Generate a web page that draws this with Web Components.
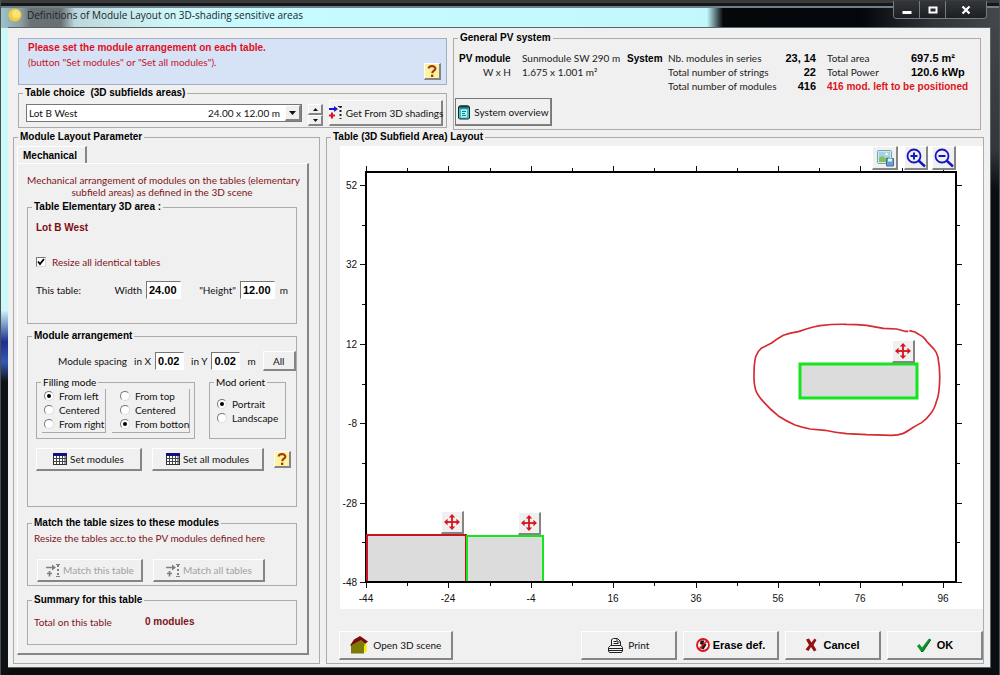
<!DOCTYPE html>
<html lang="en">
<head>
<meta charset="utf-8">
<title>Definitions of Module Layout on 3D-shading sensitive areas</title>
<style>
  html { height: 100%; }
  body { margin: 0; min-height: 100%; display: flex; background: #000; }
</style>
</head>
<body>
<app-window></app-window>
<script>
const base = `
  *, *::before, *::after { box-sizing: border-box; }
  button, input, select { font: inherit; color: inherit; margin: 0; }
  b { font: bold 10px "Liberation Sans", Arial, sans-serif; line-height: inherit; }
  p { margin: 0; }
`;

function define(name, markup, setup) {
  const template = document.createElement('template');
  template.innerHTML = markup;
  customElements.define(name, class extends HTMLElement {
    connectedCallback() {
      if (this.shadowRoot) return;
      const root = this.attachShadow({ mode: 'open' });
      root.append(template.content.cloneNode(true));
      if (setup) setup(this, root);
    }
  });
}

const icons = {
  help: ['0 0 14 14', `<path d="M3.7 4.6C3.7 1.4 10.6 1.3 10.4 4.6C10.3 6.8 7.4 6.5 7.2 9.2" fill="none" stroke="#a33a10" stroke-width="2.1"/><rect x="6" y="10.6" width="2.3" height="2.4" fill="#a33a10"/>`],
  fetch: ['0 0 15 15', `<path d="M1 4h7" stroke="#1414d8" stroke-width="2"/><path d="M6 1l4 3-4 3z" fill="#1414d8"/><path d="M1 10.500h6M4 7.500v6" stroke="#d81020" stroke-width="2"/><path d="M12.500 1v13" stroke="#222" stroke-width="2" stroke-dasharray="2 2"/><path d="M10 1.500h4" stroke="#222"/>`],
  match: ['0 0 15 15', `<g stroke="#808080" fill="none"><path d="M1 4.500h7M2 10.500h5M4.500 8v5.500" stroke-width="1.700"/><path d="M13 2v12" stroke-width="2" stroke-dasharray="2 2"/><path d="M11 1.500h4M11 13.500h4"/></g><path d="M7 1.500l4 3-4 3z" fill="#808080"/>`],
  notebook: ['0 0 14 16', `<path d="M1.500 3l1-1h9l1 1v11l-1 1h-9l-1-1z" fill="#35c4c9" stroke="#222"/><path d="M3 1.500v3M5 1v3.500M7 1v3.500M9 1v3.500M11 1.500v3" stroke="#111"/><path d="M4 5.500h6v8H4z" fill="#b8f2ee"/><path d="M5 7.500h4M5 9.500h3M5 11.500h4" stroke="#167e86"/>`],
  grid: ['0 0 14 12', `<rect x=".5" y=".5" width="13" height="11" fill="#fff" stroke="#333"/><rect width="14" height="3" fill="#12127e"/><path d="M1 5.500h12M1 8.500h12M3.500 3v8M6.500 3v8M9.500 3v8M12 3v8" stroke="#444"/>`],
  move: ['0 0 16 16', `<g fill="#d8141c"><path d="M8 0l3.200 3.600H4.800zM8 16l3.200-3.600H4.800zM0 8l3.600-3.200v6.400zM16 8l-3.600-3.200v6.400z"/><path d="M7.100 3h1.800v10H7.100z"/><path d="M3 7.100h10v1.800H3z"/></g>`],
  house: ['0 0 18 18', `<path d="M13 7l4 2v6l-4 2.500z" fill="#f2f014"/><path d="M1 9h13v8.500H1z" fill="#7d7b08"/><path d="M0 9.500l4-6L10 0l8 5.500-3 2.500-4-3.500L2 9.500z" fill="#7a0c0c"/><path d="M2 9L11 4l3.500 4v2H2z" fill="#7d7b08"/>`],
  print: ['0 0 15 15', `<g fill="#f4f4f4" stroke="#222"><path d="M3.500 8V1.500L5.500.5h4l3 3V8"/><path d="M5.500 3.500h3M5.500 5.500h5M9 1v3h3" fill="none"/><path d="M.5 9.500l2-2h10.500l1.500 2v3.500l-1 1.500h-12l-1-1.500z"/><path d="M.5 10.500h14M1 12.500h13" fill="none"/></g>`],
  erase: ['0 0 14 14', `<circle cx="7" cy="7" r="6" fill="none" stroke="#d8141c" stroke-width="1.800"/><path d="M4.500 2.500h4l-1 2.500 3 1.500-3 5-2.500-1 1.500-3.500-2.500-1z" fill="#301010"/><path d="M11 3L3 11" stroke="#d8141c" stroke-width="1.500"/>`],
  cancel: ['0 0 12 14', `<path d="M1 1.500l3-1 2.500 4L9.500.5l2 1.500-3 5 3 5-2.500 1.500-3-4.500-2.500 4-3-1.500L4 7z" fill="#941014"/>`],
  ok: ['0 0 15 14', `<path d="M1 8l2.500-2 2.500 3.500L13 .5l2 1L7 13.500H5z" fill="#12922a"/><path d="M5 13.500h2L15 1.500" fill="none" stroke="#075a14"/>`],
  picture: ['0 0 18 18', `<rect x="1.500" y="1.500" width="14" height="13" rx="1" fill="#cfe6ee" stroke="#72a4b4"/><rect x="3" y="3" width="11" height="6" fill="#9cd4ec"/><path d="M3 13V9l3-2 3 2 5-1v5z" fill="#8cbd5a"/><circle cx="10.500" cy="5" r="1.500" fill="#fff6b0"/><path d="M10.500 9.500h7v7.500h-7z" fill="#6aa0cc" stroke="#3f749c"/><path d="M12 9.500h4v3h-4z" fill="#e6f3fb"/>`],
  zoomin: ['0 0 20 20', `<g fill="none" stroke="#1616c0"><circle cx="8" cy="8" r="6.500" stroke-width="1.800"/><path d="M4.500 8h7M8 4.500v7" stroke-width="2"/><path d="M12.500 12.500l6.500 6" stroke-width="2.400"/></g>`],
  zoomout: ['0 0 20 20', `<g fill="none" stroke="#1616c0"><circle cx="8" cy="8" r="6.500" stroke-width="1.800"/><path d="M4.500 8h7" stroke-width="2"/><path d="M12.500 12.500l6.500 6" stroke-width="2.400"/></g>`],
  sun: ['0 0 14 14', `<circle cx="7" cy="7" r="6.500" fill="#f2cd3c"/><circle cx="8" cy="6" r="4" fill="#fae27c"/>`],
  min: ['0 0 10 10', `<path d="M.5 6h9v3h-9z" fill="#fff"/>`],
  max: ['0 0 10 10', `<rect x="1.500" y="2.500" width="7" height="5" fill="none" stroke="#fff" stroke-width="2"/>`],
  close: ['0 0 10 10', `<path d="M1.500 1.500l7 7M8.500 1.500l-7 7" stroke="#fff" stroke-width="2.200"/>`],
  up: ['0 0 5 3', `<path d="M0 3l2.500-3L5 3z" fill="#111"/>`],
  down: ['0 0 7 4', `<path d="M0 0l3.500 4L7 0z" fill="#111"/>`],
  less: ['0 0 5 3', `<path d="M0 0l2.500 3L5 0z" fill="#111"/>`]
};

define('ui-icon', `<style>:host{display:block;flex:none} svg{display:block}</style><svg aria-hidden="true"></svg>`, (host, root) => {
  const [box, shapes] = icons[host.getAttribute('name')];
  const [, , w, h] = box.split(' ');
  const svg = root.querySelector('svg');
  svg.setAttribute('viewBox', box);
  svg.setAttribute('width', w);
  svg.setAttribute('height', h);
  svg.innerHTML = shapes;
});

define('group-box', `<style>${base}
  :host { display: flex; flex-direction: column; min-width: 0; }
  fieldset { flex: 1; display: flex; flex-direction: column; margin: 0; min-width: 0; padding: 0;
    border: 1px solid #ababab; }
  legend { margin-left: 4px; padding: 0 2px; font: bold 10px "Liberation Sans", Arial, sans-serif; color: #000; line-height: 12px; white-space: pre; }
  :host([plain]) legend { font: inherit; line-height: 12px; }
</style><fieldset><legend></legend><slot></slot></fieldset>`, (host, root) => {
  root.querySelector('legend').textContent = host.getAttribute('label');
});

define('win-button', `<style>${base}
  :host { display: block; flex: none; }
  button { width: 100%; height: 100%; display: flex; align-items: center; justify-content: center; gap: 3px;
    padding: 0; background: var(--face, #f0f0f0); border: solid; border-width: 1px 2px 2px 1px;
    border-color: #fff #858585 #858585 #fff; white-space: nowrap; border-radius: 0; }
  button:disabled { color: #a0a0a0; }
</style><button type="button"><slot name="icon"></slot><slot></slot></button>`, (host, root) => {
  const button = root.querySelector('button');
  button.disabled = host.hasAttribute('off');
  if (host.hasAttribute('name')) button.setAttribute('aria-label', host.getAttribute('name'));
});

define('help-button', `<style>
  :host { display: block; flex: none; width: 17px; height: 17px; }
  win-button { --face: #fdf3a0; height: 17px; }
</style><win-button name="Help"><ui-icon slot="icon" name="help"></ui-icon></win-button>`);

define('num-field', `<style>${base}
  :host { display: flex; align-items: center; }
  label { margin-right: 4px; white-space: nowrap; }
  input { width: var(--field, 35px); height: 18px; padding: 0 0 0 2px; border: 1px solid; border-radius: 0;
    border-color: #777 #fff #fff #777; background: #fff; color: #000; font: bold 11px "Liberation Sans", Arial, sans-serif; }
</style><label for="v"></label><input id="v" type="text">`, (host, root) => {
  root.querySelector('label').textContent = host.getAttribute('label');
  root.querySelector('input').value = host.getAttribute('value');
});

define('radio-list', `<style>${base}
  :host { display: block; }
  label { display: flex; align-items: center; gap: 5px; height: 14px; white-space: nowrap; }
  input { appearance: none; flex: none; width: 10px; height: 10px; border-radius: 50%; border: 1px solid;
    border-color: #777 #ddd #ddd #777; background: #fff; display: grid; place-items: center; }
  input:checked::before { content: ""; width: 4px; height: 4px; border-radius: 50%; background: #000; }
</style><div role="radiogroup"></div>`, (host, root) => {
  const list = root.querySelector('div');
  list.setAttribute('aria-label', host.getAttribute('label'));
  for (const text of host.getAttribute('options').split('|')) {
    const label = document.createElement('label');
    const input = document.createElement('input');
    input.type = 'radio';
    input.name = 'choice';
    input.checked = text === host.getAttribute('value');
    label.append(input, text);
    list.append(label);
  }
});

define('message-panel', `<style>${base}
  :host { display: flex; justify-content: space-between; height: 47px; padding: 1px 5px 4px 9px; color: #c41428;
    background: #d6e2f6; border: 1px solid #a3b0c4; line-height: 15px; }
  b { display: block; color: #e0101c; }
  help-button { align-self: flex-end; }
</style><p><b>Please set the module arrangement on each table.</b>(button "Set modules" or "Set all modules").</p>
<help-button></help-button>`);

define('table-chooser', `<style>${base}
  :host { display: block; }
  group-box { height: 41px; }
  .row { display: flex; align-items: flex-start; padding: 1px 3px 0 7px; }
  .combo { flex: 1; display: grid; grid-template-columns: 1fr 96px 16px; height: 18px; margin: 4px 6px 0 0;
    border: 1px solid #777; background: #fff; align-items: center; }
  select { grid-area: 1 / 1 / 2 / 4; height: 16px; width: 100%; appearance: none; border: 0; padding: 0 2px;
    background: none; border-radius: 0; }
  output { grid-area: 1 / 2; text-align: right; padding-right: 5px; pointer-events: none; white-space: nowrap; }
  .arrow { grid-area: 1 / 3; display: grid; place-items: center; height: 16px; background: #f0f0f0;
    border: solid; border-width: 1px 2px 2px 1px; border-color: #fff #858585 #858585 #fff; pointer-events: none; }
  .spin { width: 15px; margin: 4px 6px 0 0; }
  .spin win-button { height: 11px; }
  .get { width: 114px; height: 26px; }
</style>
<group-box label="Table choice  (3D subfields areas)"><div class="row">
  <div class="combo">
    <select aria-label="Table"><option>Lot B West</option></select>
    <output>24.00 x 12.00 m</output>
    <span class="arrow"><ui-icon name="down"></ui-icon></span>
  </div>
  <div class="spin">
    <win-button name="Previous table"><ui-icon slot="icon" name="up"></ui-icon></win-button>
    <win-button name="Next table"><ui-icon slot="icon" name="less"></ui-icon></win-button>
  </div>
  <win-button class="get"><ui-icon slot="icon" name="fetch"></ui-icon>Get From 3D shadings</win-button>
</div></group-box>`);

define('system-summary', `<style>${base}
  :host { display: flex; flex-direction: column; }
  group-box { flex: 1; }
  .facts { display: grid; grid-template-columns: 63px 105px 41px 104px 44px 11px 84px 1fr; grid-auto-rows: 14px;
    align-items: center; padding: 7px 0 0 5px; white-space: nowrap; color: #222; }
  .facts b { color: #000; }
  .r { text-align: right; }
  .hw { text-align: right; padding-right: 11px; }
  .facts .num { font-size: 11px; }
  .facts .left { grid-column: span 2; color: #dc1420; }
  win-button { width: 97px; height: 28px; margin: 5px 0 0 1px; outline: 1px solid #777; outline-offset: -1px; }
</style>
<group-box label="General PV system">
  <div class="facts">
    <b>PV module</b><span>Sunmodule SW 290 m</span><b>System</b><span>Nb. modules in series</span><b class="r num">23, 14</b><i></i><span>Total area</span><b class="num">697.5 m²</b>
    <span class="hw">W x H</span><span>1.675 x 1.001 m²</span><i></i><span>Total number of strings</span><b class="r num">22</b><i></i><span>Total Power</span><b class="num">120.6 kWp</b>
    <i></i><i></i><i></i><span>Total number of modules</span><b class="r num">416</b><i></i><b class="left">416 mod. left to be positioned</b>
  </div>
  <win-button><ui-icon slot="icon" name="notebook"></ui-icon>System overview</win-button>
</group-box>`);

define('mechanical-panel', `<style>${base}
  :host { display: flex; flex-direction: column; }
  .outer { flex: 1; }
  .tab { width: 70px; height: 17px; margin: 3px 0 0 3px; padding: 0 0 0 5px; background: none; text-align: left; font: bold 10px "Liberation Sans", Arial, sans-serif;
    border: solid; border-width: 1px 2px 0 1px; border-color: #fff #858585 #fff #fff; border-radius: 0; color: #000; }
  .page { flex: 1; margin: 0 10px 8px 3px; padding: 10px 10px 8px 9px; display: flex; flex-direction: column;
    border: solid; border-width: 1px 2px 2px 1px; border-color: #fff #858585 #858585 #fff; }
  .intro { text-align: center; line-height: 12px; height: 24px; margin-bottom: 3px; color: #7e1420; white-space: nowrap; }
  .wine, .resize { color: #7e1420; line-height: 12px; white-space: nowrap; }
  b.wine { display: block; color: #7e0c14; }
  .area { height: 123px; }
  .arrange { height: 177px; margin-top: 6px; }
  .match { height: 69px; margin-top: 10px; }
  .sum { height: 51px; margin-top: 8px; }
  .in { padding: 9px 5px 0 8px; }
  .resize { display: flex; align-items: center; gap: 6px; margin-top: 22px; }
  .resize input { appearance: none; width: 10px; height: 10px; background: #fff; border: 1px solid; border-color: #777 #ddd #ddd #777; }
  .resize input:checked { background: #fff url("data:image/svg+xml,%3Csvg xmlns='http://www.w3.org/2000/svg' viewBox='0 0 8 8'%3E%3Cpath d='M1 3.500l2 2.500 4-5' fill='none' stroke='%23000' stroke-width='1.800'/%3E%3C/svg%3E"); }
  .line { display: flex; align-items: center; white-space: nowrap; }
  .size { display: grid; grid-template-columns: 1fr auto 94px 16px; margin: 13px 0 0; }
  .size num-field { justify-self: end; }
  .size > :last-child { justify-self: end; padding-right: 3px; }
  .spacing { gap: 7px; padding-left: 22px; --field: 29px; }
  .spacing win-button { width: 33px; height: 20px; margin-left: auto; }
  .modes { display: flex; gap: 14px; margin-top: 5px; }
  .modes group-box { height: 63px; }
  .fill { width: 159px; }
  .orient { width: 77px; }
  .pair { display: flex; gap: 6px; padding: 1px 4px 0 5px; }
  .pair radio-list { flex: 0 0 64px; padding: 0 0 1px 2px; border: solid #aaa; border-width: 0 1px 1px 0; }
  .pair radio-list + radio-list { flex: 1; padding-left: 8px; }
  .orient radio-list { padding: 9px 0 0 7px; }
  .buttons { display: flex; gap: 10px; margin-top: 9px; align-items: center; }
  .buttons win-button { width: 106px; height: 23px; }
  .buttons win-button + win-button { width: 112px; }
  .match .in { padding: 3px 5px 0 6px; }
  .match .buttons { margin: 15px 0 0 3px; }
  .total { display: grid; grid-template-columns: 111px 1fr; padding: 10px 6px 0; line-height: 12px; color: #7e1420; }
</style>
<group-box class="outer" label="Module Layout Parameter">
  <button class="tab" type="button" role="tab" aria-selected="true">Mechanical</button>
  <div class="page">
    <p class="intro">Mechanical arrangement of modules on the tables (elementary<br>subfield areas) as defined in the 3D scene</p>
    <group-box class="area" label="Table Elementary 3D area :"><div class="in">
      <b class="wine">Lot B West</b>
      <label class="resize"><input type="checkbox" checked>Resize all identical tables</label>
      <div class="line size"><span>This table:</span><num-field label="Width" value="24.00"></num-field><num-field label="&quot;Height&quot;" value="12.00"></num-field><span>m</span></div>
    </div></group-box>
    <group-box class="arrange" label="Module arrangement"><div class="in">
      <div class="line spacing"><span>Module spacing</span><num-field label="in X" value="0.02"></num-field><num-field label="in Y" value="0.02"></num-field><span>m</span><win-button>All</win-button></div>
      <div class="modes">
        <group-box class="fill" plain label="Filling mode"><div class="pair">
          <radio-list label="Horizontal filling" options="From left|Centered|From right" value="From left"></radio-list>
          <radio-list label="Vertical filling" options="From top|Centered|From botton" value="From botton"></radio-list>
        </div></group-box>
        <group-box class="orient" plain label="Mod orient"><radio-list label="Module orientation" options="Portrait|Landscape" value="Portrait"></radio-list></group-box>
      </div>
      <div class="buttons">
        <win-button><ui-icon slot="icon" name="grid"></ui-icon>Set modules</win-button>
        <win-button><ui-icon slot="icon" name="grid"></ui-icon>Set all modules</win-button>
        <help-button></help-button>
      </div>
    </div></group-box>
    <group-box class="match" label="Match the table sizes to these modules"><div class="in">
      <p class="wine">Resize the tables acc.to the PV modules defined here</p>
      <div class="buttons">
        <win-button off><ui-icon slot="icon" name="match"></ui-icon>Match this table</win-button>
        <win-button off><ui-icon slot="icon" name="match"></ui-icon>Match all tables</win-button>
      </div>
    </div></group-box>
    <group-box class="sum" label="Summary for this table"><div class="total"><span>Total on this table</span><b>0 modules</b></div></group-box>
  </div>
</group-box>`);

define('layout-chart', `<style>${base}
  :host { display: block; position: relative; background: #fff; }
  svg { display: block; width: 100%; height: auto; }
  text { font: 10px "Liberation Sans", Arial, sans-serif; fill: #111; }
  .tools { position: absolute; top: 0; right: 27px; display: flex; gap: 4px; }
  .tools win-button { width: 24px; height: 24px; }
  .tools win-button:first-child { width: 26px; margin-right: 2px; }
  foreignObject win-button { width: 23px; height: 23px; }
</style>
<svg viewBox="0 0 643 463" role="img" aria-label="Table layout">
  <g class="axes" stroke="#111"></g>
  <g class="labels"></g>
  <rect x="26" y="26" width="590" height="410" fill="#fff" stroke="#000" stroke-width="2"/>
  <path d="M27 390h99v45H27z" fill="#dcdcdc"/><path d="M126 391h77v45h-77z" fill="#dcdcdc"/>
  <path d="M27 436v-47h99v47" fill="none" stroke="#c81420" stroke-width="2"/>
  <path d="M127 436v-46h76v46" fill="none" stroke="#14e61e" stroke-width="2"/>
  <path d="M25 436h592" stroke="#000" stroke-width="2"/>
  <rect x="460" y="218" width="117" height="34" fill="#dcdcdc" stroke="#14e61e" stroke-width="3"/>
  <g transform="translate(400 -16) scale(.3333)"><path fill="none" stroke="#d42a30" stroke-width="5" stroke-linejoin="round"
    d="M508 602L525 606L548 620Q556 628 560 634L580 655Q590 666 594 682Q602 725 598 770Q596 800 590 812Q584 836 573 850Q560 868 545 878Q530 886 520 892Q500 906 488 911Q475 916 455 916L380 914L320 911Q285 908 255 901L210 897Q185 892 165 885Q140 874 115 858Q90 838 70 815Q52 795 47 780Q41 760 42 735Q42 700 47 680Q52 665 65 654L95 639Q112 626 130 616Q150 609 175 605Q200 596 220 591L240 587Q280 582 320 583Q350 583 380 586L430 595L470 597L495 604H505"/></g>
  <foreignObject x="101" y="365" width="24" height="24"><win-button name="Move table"><ui-icon slot="icon" name="move"></ui-icon></win-button></foreignObject>
  <foreignObject x="178" y="366" width="24" height="24"><win-button name="Move table"><ui-icon slot="icon" name="move"></ui-icon></win-button></foreignObject>
  <foreignObject x="552" y="194" width="24" height="24"><win-button name="Move table"><ui-icon slot="icon" name="move"></ui-icon></win-button></foreignObject>
</svg>
<div class="tools">
  <win-button name="Save picture"><ui-icon slot="icon" name="picture"></ui-icon></win-button>
  <win-button name="Zoom in"><ui-icon slot="icon" name="zoomin"></ui-icon></win-button>
  <win-button name="Zoom out"><ui-icon slot="icon" name="zoomout"></ui-icon></win-button>
</div>`, (host, root) => {
  const x = v => Math.round(26 + (v + 44) * 4.12) + .5;
  const y = v => Math.round(436 - (v + 48) * 3.97) + .5;
  let d = '', labels = '';
  for (let v = -44; v <= 96; v += 10) {
    const major = (v + 44) % 20 === 0, n = major ? 5 : 3;
    d += `M${x(v)} ${25 - n}V26M${x(v)} 436V${437 + n}`;
    if (major) labels += `<text x="${x(v) - .5}" y="456" text-anchor="middle">${v}</text>`;
  }
  for (let v = -48; v <= 52; v += 10) {
    const major = (v + 48) % 20 === 0, n = major ? 5 : 3;
    d += `M${25 - n} ${y(v)}H26M616 ${y(v)}H${617 + n}`;
    if (major) labels += `<text x="17" y="${y(v) + 3.5}" text-anchor="end">${v}</text>`;
  }
  root.querySelector('.axes').innerHTML = `<path d="${d}"/>`;
  root.querySelector('.labels').innerHTML = labels;
});

define('action-bar', `<style>${base}
  :host { display: flex; gap: 6px; }
  win-button { width: 96px; height: 29px; }
  .scene { width: 114px; margin-right: auto; }
  .strong { font: bold 11px "Liberation Sans", Arial, sans-serif; color: #000; }
</style>
<win-button class="scene"><ui-icon slot="icon" name="house"></ui-icon>&nbsp;Open 3D scene</win-button>
<win-button><ui-icon slot="icon" name="print"></ui-icon>&nbsp;Print</win-button>
<win-button class="strong"><ui-icon slot="icon" name="erase"></ui-icon>Erase def.</win-button>
<win-button class="strong"><ui-icon slot="icon" name="cancel"></ui-icon>&nbsp;Cancel</win-button>
<win-button class="strong"><ui-icon slot="icon" name="ok"></ui-icon>&nbsp;OK</win-button>`);

define('area-panel', `<style>${base}
  :host { display: flex; flex-direction: column; }
  group-box { flex: 1; }
  layout-chart { margin: 3px 0 0 13px; }
  action-bar { margin: 22px 0 2px 12px; }
</style>
<group-box label="Table (3D Subfield Area) Layout"><layout-chart></layout-chart><action-bar></action-bar></group-box>`);

define('title-bar', `<style>${base}
  :host { display: flex; align-items: flex-start; height: 27px; padding: 8px 4px 0 0; color: #16262c; font: 10px "Open Sans", sans-serif; }
  ui-icon { margin-right: 5px; }
  h1 { margin: 0; flex: 1; font: inherit; line-height: 14px; white-space: nowrap; }
  .caption { display: flex; height: 18px; margin-top: -7px; border: 1px solid #777b80; border-top: 0; border-radius: 0 0 4px 4px; overflow: hidden; }
  .caption button { width: 26px; display: grid; place-items: center; padding: 0; background: linear-gradient(#33363a, #1c1f22); border: 0; border-right: 1px solid #777b80; }
  .caption button ui-icon { margin: 0; }
  .caption button:last-child { width: 40px; border: 0; }
</style>
<ui-icon name="sun"></ui-icon><h1>Definitions of Module Layout on 3D-shading sensitive areas</h1>
<div class="caption"><button type="button" aria-label="Minimize"><ui-icon name="min"></ui-icon></button><button type="button" aria-label="Maximize"><ui-icon name="max"></ui-icon></button><button type="button" aria-label="Close"><ui-icon name="close"></ui-icon></button></div>`);

define('app-window', `<style>${base}
  :host { flex: 1; min-width: 0; display: flex; flex-direction: column; padding: 0 8px 7px 7px;
    font: 10px Lato, "Liberation Sans", Arial, sans-serif; color: #111;
    background:
      linear-gradient(#3c3c3c 0 3px, #15181a 3px 6px, #6f8086 6px 8px, transparent 8px 20px) top / 100% 20px no-repeat,
      linear-gradient(90deg, #9cc3ca 0, #8d9da2 20px, #6a7274 30px, #6a7072 60px, #bdd8dc 74px, #cff6f9 170px, #c6fbff 260px, #c2f8fc 706px, #04080b 722px, #03060a 860px, #303336 930px, #45484b) top / 100% 28px no-repeat,
      linear-gradient(#cdf8f8 0, #cdf8f8 310px, #1c2f92 342px, #3558b4 362px, #101114 382px) left / 8px 100% no-repeat,
      linear-gradient(#45484b, #33363a 150px, #0b0d10 190px) right / 9px 100% no-repeat,
      #0c0c0e;
    border: 1px solid #4a4f52; border-width: 0 1px 1px; }
  .client { flex: 1; display: flex; flex-direction: column; background: #f0f0f0; border: 1px solid #596569; border-width: 1px 1px 1px 0; padding: 4px 6px 3px 5px; }
  .top { display: flex; gap: 6px; margin: 0 3px 0 5px; }
  .left { flex: none; width: 429px; display: flex; flex-direction: column; gap: 2px; padding-top: 6px; }
  system-summary { flex: 1; min-width: 0; height: 98px; }
  .main { flex: 1; display: flex; align-items: stretch; gap: 6px; margin-top: 1px; }
  mechanical-panel { flex: none; width: 307px; }
  area-panel { flex: 1; min-width: 0; }
</style>
<title-bar></title-bar>
<main class="client">
  <div class="top"><div class="left"><message-panel></message-panel><table-chooser></table-chooser></div><system-summary></system-summary></div>
  <div class="main"><mechanical-panel></mechanical-panel><area-panel></area-panel></div>
</main>`);
</script>
</body>
</html>
